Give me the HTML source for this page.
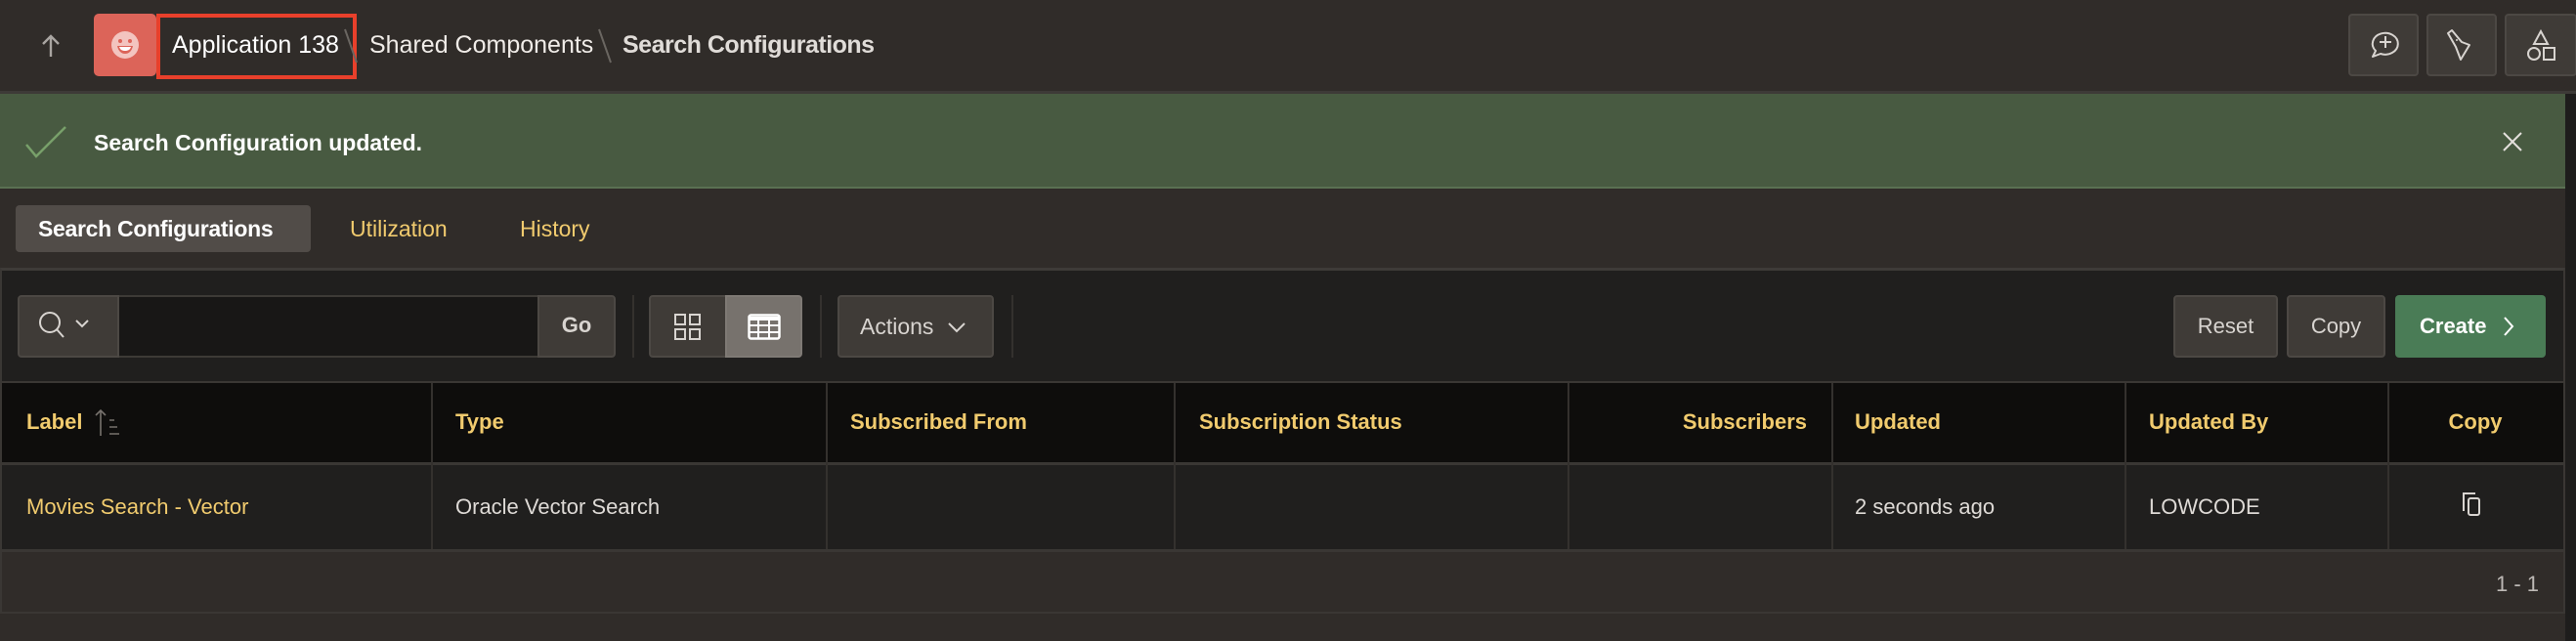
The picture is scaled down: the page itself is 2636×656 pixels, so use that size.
<!DOCTYPE html>
<html><head><meta charset="utf-8"><style>
*{box-sizing:border-box;margin:0;padding:0}
body{width:2636px;height:656px;background:#302c29;font-family:"Liberation Sans",sans-serif;position:relative;overflow:hidden;color:#e6e2de}
.a{position:absolute}
.btn{position:absolute;background:#3f3b37;border:2px solid #4c4844;border-radius:4px}
.hd{position:absolute;top:391px;height:82px;line-height:82px;font-weight:bold;font-size:22px;color:#f1cb6e}
.td{position:absolute;top:474px;height:88px;line-height:90px;font-size:22px;color:#dedad6}
.vl{position:absolute;width:2px;background:#34312e}
</style></head><body>
<!-- header -->
<div class="a" style="left:0;top:0;width:2636px;height:94px;background:#302c29"></div>
<div class="a" style="left:0;top:93px;width:2636px;height:3px;background:#3d3a37"></div>
<svg class="a" style="left:40px;top:34px" width="24" height="26" viewBox="0 0 24 26"><path d="M12 24V3M4 11l8-8 8 8" stroke="#a9a5a1" stroke-width="2.4" fill="none"/></svg>
<div class="a" style="left:96px;top:14px;width:64px;height:64px;background:#dc6459;border-radius:5px"></div>
<svg class="a" style="left:113px;top:31px" width="30" height="30" viewBox="0 0 30 30"><circle cx="15" cy="15" r="14" fill="#f3c4bf"/><circle cx="10" cy="11" r="2" fill="#dc6459"/><circle cx="20" cy="11" r="2" fill="#dc6459"/><path d="M7 16h16c-1 5-4 8-8 8s-7-3-8-8z" fill="#dc6459"/><path d="M9 17h12c-1 3-3 4-6 4s-5-1-6-4z" fill="#fff"/></svg>
<div class="a" style="left:160px;top:14px;width:205px;height:67px;border:4px solid #e8402b"></div>
<div class="a" style="left:176px;top:30px;font-size:25px;color:#fff;line-height:32px">Application 138</div>
<svg class="a" style="left:350px;top:28px" width="20" height="40"><path d="M3 2l12 34" stroke="#6a6661" stroke-width="2"/></svg>
<div class="a" style="left:378px;top:30px;font-size:25px;color:#f0ece8;line-height:32px">Shared Components</div>
<svg class="a" style="left:610px;top:28px" width="20" height="40"><path d="M3 2l12 34" stroke="#6a6661" stroke-width="2"/></svg>
<div class="a" style="left:637px;top:30px;font-size:25px;color:#e0dcd8;font-weight:bold;line-height:32px;letter-spacing:-0.5px">Search Configurations</div>
<div class="btn" style="left:2403px;top:14px;width:72px;height:64px"></div>
<div class="btn" style="left:2483px;top:14px;width:72px;height:64px"></div>
<div class="btn" style="left:2563px;top:14px;width:74px;height:64px"></div>
<svg class="a" style="left:2420px;top:30px" width="40" height="32" viewBox="0 0 40 32"><path d="M8 28l3-6a13 11 0 1 1 5 3z" stroke="#d8d4d0" stroke-width="2" fill="none" stroke-linejoin="round"/><path d="M21 7v12M15 13h12" stroke="#d8d4d0" stroke-width="2"/></svg>
<svg class="a" style="left:2500px;top:28px" width="40" height="36" viewBox="0 0 40 36"><path d="M5 6l4-3 10 12 8 3-9 15-5-13z" stroke="#d8d4d0" stroke-width="2" fill="none" stroke-linejoin="round"/><circle cx="14" cy="13" r="1" fill="#d8d4d0"/></svg>
<svg class="a" style="left:2581px;top:30px" width="40" height="34" viewBox="0 0 40 34"><path d="M19 2l-7 13h14z" stroke="#d8d4d0" stroke-width="2" fill="none"/><circle cx="12" cy="25" r="6" stroke="#d8d4d0" stroke-width="2" fill="none"/><rect x="22" y="19" width="11" height="12" stroke="#d8d4d0" stroke-width="2" fill="none"/></svg>
<!-- right strip -->
<div class="a" style="left:2625px;top:96px;width:11px;height:560px;background:#1e1d1c"></div>
<!-- success -->
<div class="a" style="left:0;top:96px;width:2625px;height:97px;background:#485a41;border-bottom:2px solid #5a7052"></div>
<svg class="a" style="left:25px;top:128px" width="46" height="34"><path d="M2 20l10 12L42 2" stroke="#78a06a" stroke-width="2.5" fill="none"/></svg>
<div class="a" style="left:96px;top:131px;font-size:23px;font-weight:bold;color:#fff;line-height:30px">Search Configuration updated.</div>
<svg class="a" style="left:2560px;top:134px" width="22" height="22"><path d="M2 2l18 18M20 2L2 20" stroke="#e4e0dc" stroke-width="2"/></svg>
<!-- tabs -->
<div class="a" style="left:16px;top:210px;width:302px;height:48px;background:#514c48;border-radius:4px"></div>
<div class="a" style="left:39px;top:220px;font-size:23px;font-weight:bold;color:#fff;line-height:28px;letter-spacing:-0.3px">Search Configurations</div>
<div class="a" style="left:358px;top:220px;font-size:23px;color:#f1cb6e;line-height:28px">Utilization</div>
<div class="a" style="left:532px;top:220px;font-size:23px;color:#f1cb6e;line-height:28px">History</div>
<!-- report region -->
<div class="a" style="left:0;top:274px;width:2625px;height:354px;background:#201f1e;border:2px solid #3a3734;border-top:3px solid #3e3b38"></div>
<div class="btn" style="left:18px;top:302px;width:104px;height:64px;border-radius:4px 0 0 4px"></div>
<svg class="a" style="left:36px;top:316px" width="60" height="36" viewBox="0 0 60 36"><circle cx="15" cy="14" r="10" stroke="#d8d4d0" stroke-width="2" fill="none"/><path d="M22 21l7 8M42 12l6 6 6-6" stroke="#d8d4d0" stroke-width="2" fill="none"/></svg>
<div class="a" style="left:122px;top:302px;width:428px;height:64px;background:#181716;border:2px solid #3d3a36;border-left:none;border-right:none"></div>
<div class="btn" style="left:550px;top:302px;width:80px;height:64px;border-radius:0 4px 4px 0"></div>
<div class="a" style="left:550px;top:320px;width:80px;text-align:center;font-size:22px;font-weight:bold;color:#d8d4d0">Go</div>
<div class="vl" style="left:647px;top:302px;height:64px"></div>
<div class="btn" style="left:664px;top:302px;width:80px;height:64px;border-radius:4px 0 0 4px"></div>
<svg class="a" style="left:689px;top:320px" width="30" height="30"><rect x="2" y="2" width="10" height="10" stroke="#d8d4d0" stroke-width="2" fill="none"/><rect x="17" y="2" width="10" height="10" stroke="#d8d4d0" stroke-width="2" fill="none"/><rect x="2" y="17" width="10" height="10" stroke="#d8d4d0" stroke-width="2" fill="none"/><rect x="17" y="17" width="10" height="10" stroke="#d8d4d0" stroke-width="2" fill="none"/></svg>
<div class="a" style="left:742px;top:302px;width:79px;height:64px;background:#77726d;border:2px solid #7f7a75;border-radius:0 4px 4px 0"></div>
<svg class="a" style="left:765px;top:321px" width="34" height="28"><rect x="1.5" y="1.5" width="31" height="24" rx="2" stroke="#fff" stroke-width="2.5" fill="none"/><path d="M2 5h30" stroke="#fff" stroke-width="4"/><path d="M2 12h30M2 19h30M11 6v19M22 6v19" stroke="#fff" stroke-width="2"/></svg>
<div class="vl" style="left:839px;top:302px;height:64px"></div>
<div class="btn" style="left:857px;top:302px;width:160px;height:64px"></div>
<div class="a" style="left:880px;top:320px;font-size:23px;color:#d8d4d0;line-height:28px">Actions</div>
<svg class="a" style="left:969px;top:329px" width="20" height="12"><path d="M2 2l8 8 8-8" stroke="#d8d4d0" stroke-width="2" fill="none"/></svg>
<div class="vl" style="left:1035px;top:302px;height:64px"></div>
<div class="btn" style="left:2224px;top:302px;width:107px;height:64px"></div>
<div class="a" style="left:2224px;top:320px;width:107px;text-align:center;font-size:22px;color:#d8d4d0;line-height:28px">Reset</div>
<div class="btn" style="left:2340px;top:302px;width:101px;height:64px"></div>
<div class="a" style="left:2340px;top:320px;width:101px;text-align:center;font-size:22px;color:#d8d4d0;line-height:28px">Copy</div>
<div class="a" style="left:2451px;top:302px;width:154px;height:64px;background:#4a7c56;border-radius:4px"></div>
<div class="a" style="left:2476px;top:320px;font-size:22px;font-weight:bold;color:#fff;line-height:28px">Create</div>
<svg class="a" style="left:2561px;top:323px" width="12" height="22"><path d="M2 2l8 9-8 9" stroke="#fff" stroke-width="2" fill="none"/></svg>
<!-- table -->
<div class="a" style="left:2px;top:390px;width:2621px;height:2px;background:#3a3734"></div>
<div class="a" style="left:2px;top:392px;width:2621px;height:81px;background:#0e0d0c"></div>
<div class="a" style="left:2px;top:473px;width:2621px;height:3px;background:#3a3734"></div>
<div class="a" style="left:2px;top:562px;width:2621px;height:3px;background:#3a3734"></div>
<div class="a" style="left:2px;top:565px;width:2621px;height:61px;background:#302c29"></div>
<div class="vl" style="left:441px;top:392px;height:170px"></div>
<div class="vl" style="left:845px;top:392px;height:170px"></div>
<div class="vl" style="left:1201px;top:392px;height:170px"></div>
<div class="vl" style="left:1604px;top:392px;height:170px"></div>
<div class="vl" style="left:1874px;top:392px;height:170px"></div>
<div class="vl" style="left:2174px;top:392px;height:170px"></div>
<div class="vl" style="left:2443px;top:392px;height:170px"></div>
<div class="hd" style="left:27px">Label</div>
<svg class="a" style="left:95px;top:418px" width="36" height="30"><path d="M8 28V2M3 7l5-5 5 5" stroke="#77726d" stroke-width="1.6" fill="none"/><path d="M17 12h5M17 19h8M17 26h10" stroke="#77726d" stroke-width="1.6"/></svg>
<div class="hd" style="left:466px">Type</div>
<div class="hd" style="left:870px">Subscribed From</div>
<div class="hd" style="left:1227px">Subscription Status</div>
<div class="hd" style="left:1604px;width:245px;text-align:right">Subscribers</div>
<div class="hd" style="left:1898px">Updated</div>
<div class="hd" style="left:2199px">Updated By</div>
<div class="hd" style="left:2443px;width:180px;text-align:center">Copy</div>
<div class="td" style="left:27px;color:#f1cb6e">Movies Search - Vector</div>
<div class="td" style="left:466px">Oracle Vector Search</div>
<div class="td" style="left:1898px">2 seconds ago</div>
<div class="td" style="left:2199px">LOWCODE</div>
<svg class="a" style="left:2518px;top:502px" width="28" height="30"><path d="M3 21V3h12" stroke="#d8d4d0" stroke-width="2" fill="none"/><rect x="8" y="8" width="11" height="17" rx="2" stroke="#d8d4d0" stroke-width="2" fill="none"/></svg>
<div class="a" style="left:2540px;top:584px;width:58px;text-align:right;font-size:22px;color:#bdb9b5;line-height:28px">1 - 1</div>
</body></html>
